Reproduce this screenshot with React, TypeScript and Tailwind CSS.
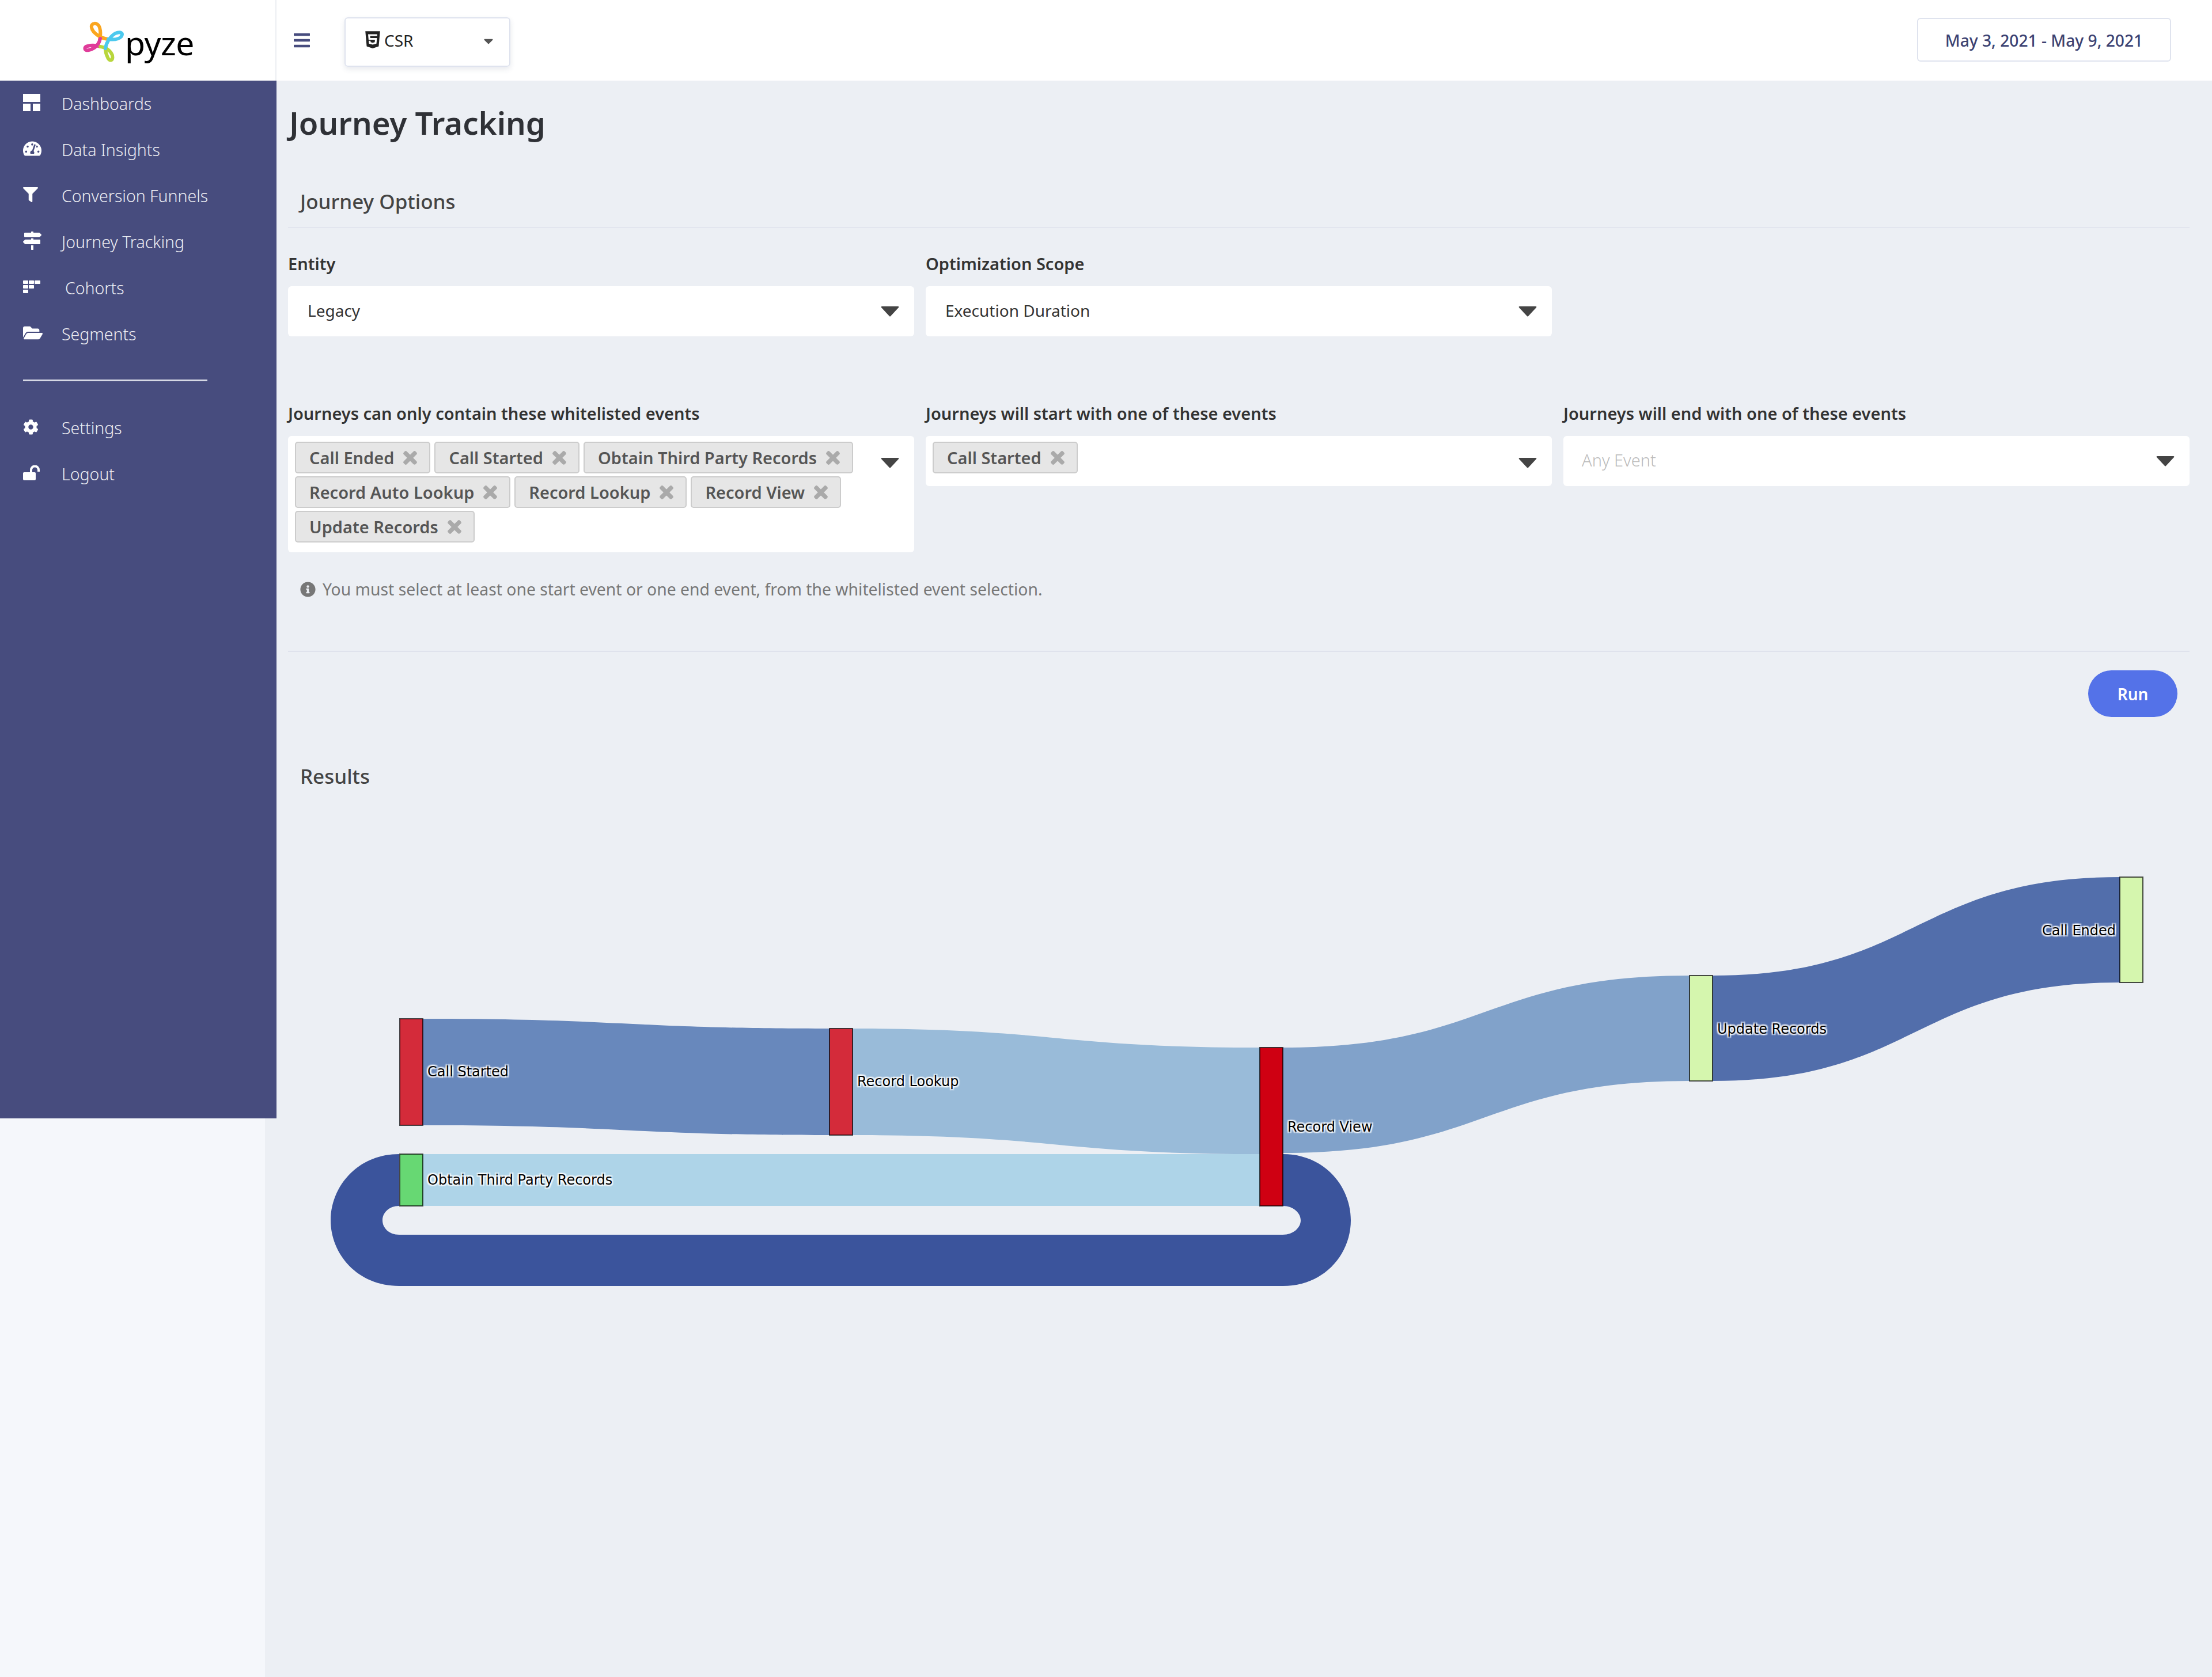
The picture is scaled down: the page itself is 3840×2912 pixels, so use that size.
import React from 'react';
import {
  FaBars,
  FaCaretDown,
  FaCog,
  FaFilter,
  FaFolderOpen,
  FaHtml5,
  FaInfoCircle,
  FaMapSigns,
  FaTachometerAlt,
  FaTimes,
} from 'react-icons/fa';

const DashboardIcon = () => (
  <svg width="30" height="30" viewBox="0 0 30 30" fill="currentColor">
    <rect x="0" y="0" width="30" height="14" />
    <rect x="0" y="17" width="13" height="13" />
    <rect x="17" y="17" width="13" height="13" />
  </svg>
);

const CohortIcon = () => (
  <svg width="30" height="22" viewBox="0 0 30 22" fill="currentColor">
    <rect x="0" y="0" width="9" height="6" rx="1" />
    <rect x="10" y="0" width="9" height="6" rx="1" />
    <rect x="20" y="0" width="10" height="6" rx="1" />
    <rect x="0" y="8" width="9" height="6" rx="1" />
    <rect x="10" y="8" width="9" height="6" rx="1" />
    <rect x="0" y="16" width="9" height="6" rx="1" />
  </svg>
);

const UnlockIcon = () => (
  <svg width="30" height="26" viewBox="0 0 30 26">
    <rect x="0" y="12" width="22" height="14" rx="2" fill="currentColor" />
    <path d="M14 13 V8 a6.5 6.5 0 0 1 13 0 v3" fill="none" stroke="currentColor" strokeWidth="4" />
  </svg>
);

const navTop = [
  { label: 'Dashboards', icon: <DashboardIcon /> },
  { label: 'Data Insights', icon: <FaTachometerAlt size={32} /> },
  { label: 'Conversion Funnels', icon: <FaFilter size={26} /> },
  { label: 'Journey Tracking', icon: <FaMapSigns size={32} /> },
  { label: 'Cohorts', icon: <CohortIcon />, extra: true },
  { label: 'Segments', icon: <FaFolderOpen size={34} /> },
];

const navBottom = [
  { label: 'Settings', icon: <FaCog size={27} /> },
  { label: 'Logout', icon: <UnlockIcon /> },
];

const NavRow = ({ label, icon, extra }: { label: string; icon: React.ReactNode; extra?: boolean }) => (
  <div className="flex h-[80px] items-center pl-[40px]">
    <span className="flex w-[67px] -translate-y-[2px] items-center">{icon}</span>
    <span className={`text-[28.5px] font-light text-white/90 ${extra ? 'pl-[6px]' : ''}`}>{label}</span>
  </div>
);

const Logo = () => (
  <div className="flex h-[140px] items-start border-r-2 border-[#eceef2] bg-white pl-[140px] pt-[34px]">
    <svg width="82" height="80" viewBox="0 0 82 80" fill="none" strokeWidth="6" strokeLinecap="round">
      <path d="M48 34 C36 33 21 24 19 14 C17 5 30 4 33 14 C35 21 35 27 33 35" stroke="#fba61f" />
      <path d="M34 33 C32 42 26 50 14 53 C6 55 5 47 12 46 C20 44 28 45 34 47" stroke="#e03c9a" />
      <path d="M34 47 C44 48 52 54 55 62 C57 72 50 73 47 66 C44 60 43 54 43 50" stroke="#b8d63c" />
      <path d="M43 50 C44 42 50 30 60 24 C70 20 75 24 70 30 C65 35 55 35 48 34" stroke="#4cc9ee" />
    </svg>
    <span className="-ml-[5px] text-[57px] leading-[80px] tracking-[-0.5px] text-black">pyze</span>
  </div>
);

const Sidebar = () => (
  <div className="relative z-10 w-[480px]">
    <Logo />
    <nav className="h-[1802px] bg-[#474c7e] text-white">
      {navTop.map((item) => (
        <NavRow key={item.label} {...item} />
      ))}
      <div className="ml-[40px] mt-[39px] h-[3px] w-[320px] bg-[#d6d8e4]" />
      <div className="mt-[41px]">
        {navBottom.map((item) => (
          <NavRow key={item.label} {...item} />
        ))}
      </div>
    </nav>
  </div>
);

const Header = () => (
  <header className="flex h-[140px] items-center justify-between bg-white pl-[48px] pr-[71px]">
    <div className="flex items-center">
      <FaBars size={32} className="text-[#474c7e]" />
      <div className="ml-[58px] mt-[6px] flex h-[86px] w-[288px] items-start rounded-[6px] border-2 border-[#dfe3ee] pl-[30px] pt-[20px] shadow-[0_4px_10px_rgba(60,70,110,0.12)]">
        <FaHtml5 size={34} className="text-[#222]" />
        <span className="ml-[3px] text-[28px] leading-[36px] text-[#222]">CSR</span>
        <FaCaretDown size={26} className="ml-[118px] mt-[6px] text-[#555]" />
      </div>
    </div>
    <div className="-mt-[2px] flex h-[76px] w-[441px] items-center justify-center rounded-[6px] border-2 border-[#dfe3ee] pt-[2px] text-[28.2px] font-medium text-[#3c4272]">
      May 3, 2021 - May 9, 2021
    </div>
  </header>
);

const Caret = () => (
  <svg width="32" height="18" viewBox="0 0 32 18" className="shrink-0 fill-[#444]">
    <path d="M2 0 H30 Q32 0 31 2 L17 17 Q16 18 15 17 L1 2 Q0 0 2 0 Z" />
  </svg>
);

const SelectBox = ({ value }: { value: string }) => (
  <div className="flex h-[87px] items-center justify-between rounded-[6px] bg-white pl-[34px] pr-[26px]">
    <span className="pb-[4px] text-[28px] text-[#333]">{value}</span>
    <Caret />
  </div>
);

const Tag = ({ label }: { label: string }) => (
  <span className="flex h-[55px] items-center rounded-[5px] border-2 border-[#cccccc] bg-[#e6e6e6] pl-[23px] pr-[17px] text-[29px] font-semibold text-[#555]">
    {label}
    <FaTimes size={32} className="ml-[12px] stroke-[24px] text-[#aaa]" />
  </span>
);

const Label = ({ children }: { children: React.ReactNode }) => (
  <div className="mb-[21px] h-[36px] text-[29px] font-semibold leading-[36px] text-[#333]">{children}</div>
);

const Sankey = () => (
  <svg viewBox="500 1500 3301 760" className="mt-[128px] block h-[760px] w-[3301px]">
    <path
      fill="#3b549c"
      d="M2227 2003 C2300 2003 2345 2060 2345 2118 C2345 2176 2300 2232 2227 2232 L693 2232 C620 2232 574 2176 574 2118 C574 2060 620 2003 693 2003 L693 2093 C675 2093 664 2105 664 2118 C664 2131 675 2143 693 2143 L2227 2143 C2245 2143 2258 2131 2258 2118 C2258 2105 2245 2093 2227 2093 Z"
    />
    <path fill="#6888bc" d="M734 1768 C1087 1768 1087 1785 1440 1785 L1440 1970 C1087 1970 1087 1953 734 1953 Z" />
    <path fill="#99bbd9" d="M1480 1785 C1834 1785 1834 1818 2187 1818 L2187 2003 C1834 2003 1834 1970 1480 1970 Z" />
    <path fill="#aed4e8" d="M734 2003 L2187 2003 L2187 2093 L734 2093 Z" />
    <path fill="#81a2ca" d="M2227 1818 C2580 1818 2580 1693 2933 1693 L2933 1876 C2580 1876 2580 2001 2227 2001 Z" />
    <path fill="#526eab" d="M2973 1693 C3326 1693 3326 1522 3680 1522 L3680 1705 C3326 1705 3326 1876 2973 1876 Z" />

    <g stroke="#000" strokeOpacity="0.7" strokeWidth="2">
      <rect x="694" y="1768" width="40" height="185" fill="#d42b3a" />
      <rect x="1440" y="1785" width="40" height="185" fill="#d42b3a" />
      <rect x="694" y="2003" width="40" height="90" fill="#67d873" />
      <rect x="2187" y="1818" width="40" height="275" fill="#cf0012" />
      <rect x="2933" y="1693" width="40" height="183" fill="#d5f6ae" />
      <rect x="3680" y="1522" width="40" height="183" fill="#d5f6ae" />
    </g>

    <g
      fontSize="24"
      dominantBaseline="central"
      className="fill-black font-['DejaVu_Sans',sans-serif] [text-shadow:2px_2px_2px_#fff,-2px_-2px_2px_#fff,2px_-2px_2px_#fff,-2px_2px_2px_#fff]"
    >
      <text x="742" y="1860">Call Started</text>
      <text x="1488" y="1877">Record Lookup</text>
      <text x="742" y="2048">Obtain Third Party Records</text>
      <text x="2235" y="1956">Record View</text>
      <text x="2981" y="1786">Update Records</text>
      <text x="3673" y="1615" textAnchor="end">Call Ended</text>
    </g>
  </svg>
);

const Content = () => (
  <div className="pl-[40px] pr-[39px] pt-[43px]">
    <h1 className="ml-[2px] h-[60px] text-[54.5px] font-semibold leading-[60px] text-[#2f3136]">Journey Tracking</h1>

    <div className="mt-[77px] border-b-2 border-[#e2e5ee] pb-[14px] pl-[21px]">
      <h2 className="h-[60px] text-[35px] font-medium leading-[60px] text-[#444]">Journey Options</h2>
    </div>

    <div className="mt-[44px] grid grid-cols-3 gap-x-[20px]">
      <div>
        <Label>Entity</Label>
        <SelectBox value="Legacy" />
      </div>
      <div>
        <Label>Optimization Scope</Label>
        <SelectBox value="Execution Duration" />
      </div>
    </div>

    <div className="mt-[116px] grid grid-cols-3 items-start gap-x-[20px]">
      <div>
        <Label>Journeys can only contain these whitelisted events</Label>
        <div className="flex h-[202px] items-start justify-between rounded-[6px] bg-white pl-[12px] pr-[26px] pt-[10px]">
          <div className="flex w-[990px] flex-wrap gap-x-[7px] gap-y-[5px]">
            {['Call Ended', 'Call Started', 'Obtain Third Party Records', 'Record Auto Lookup', 'Record Lookup', 'Record View', 'Update Records'].map((t) => (
              <Tag key={t} label={t} />
            ))}
          </div>
          <div className="pt-[28px]">
            <Caret />
          </div>
        </div>
      </div>
      <div>
        <Label>Journeys will start with one of these events</Label>
        <div className="flex h-[87px] items-start justify-between rounded-[6px] bg-white pl-[12px] pr-[26px] pt-[10px]">
          <Tag label="Call Started" />
          <div className="pt-[28px]">
            <Caret />
          </div>
        </div>
      </div>
      <div>
        <Label>Journeys will end with one of these events</Label>
        <div className="flex h-[87px] items-center justify-between rounded-[6px] bg-white pl-[32px] pr-[26px]">
          <span className="pb-[4px] text-[29px] font-light text-[#bbb]">Any Event</span>
          <Caret />
        </div>
      </div>
    </div>

    <div className="mt-[46px] flex h-[36px] items-center pl-[21px] text-[28.3px] leading-[36px] text-[#777]">
      <FaInfoCircle size={27} className="mr-[12px]" />
      You must select at least one start event or one end event, from the whitelisted event selection.
    </div>

    <div className="mt-[89px] border-b-2 border-[#dfe2ec]" />

    <div className="mt-[32px] flex justify-end pr-[21px]">
      <button className="h-[81px] w-[155px] rounded-full bg-[#5472e8] text-[28px] font-semibold text-white">Run</button>
    </div>

    <h2 className="mt-[78px] h-[50px] pl-[21px] text-[35px] font-medium leading-[50px] text-[#444]">Results</h2>

    <Sankey />
  </div>
);

export default function App() {
  return (
    <div className="flex min-h-[2912px] w-[3840px] bg-[#eceff4] font-['Noto_Sans',sans-serif]">
      <aside className="w-[460px] shrink-0 bg-[#f5f7fb]">
        <Sidebar />
      </aside>
      <main className="min-w-0 flex-1">
        <Header />
        <Content />
      </main>
    </div>
  );
}
